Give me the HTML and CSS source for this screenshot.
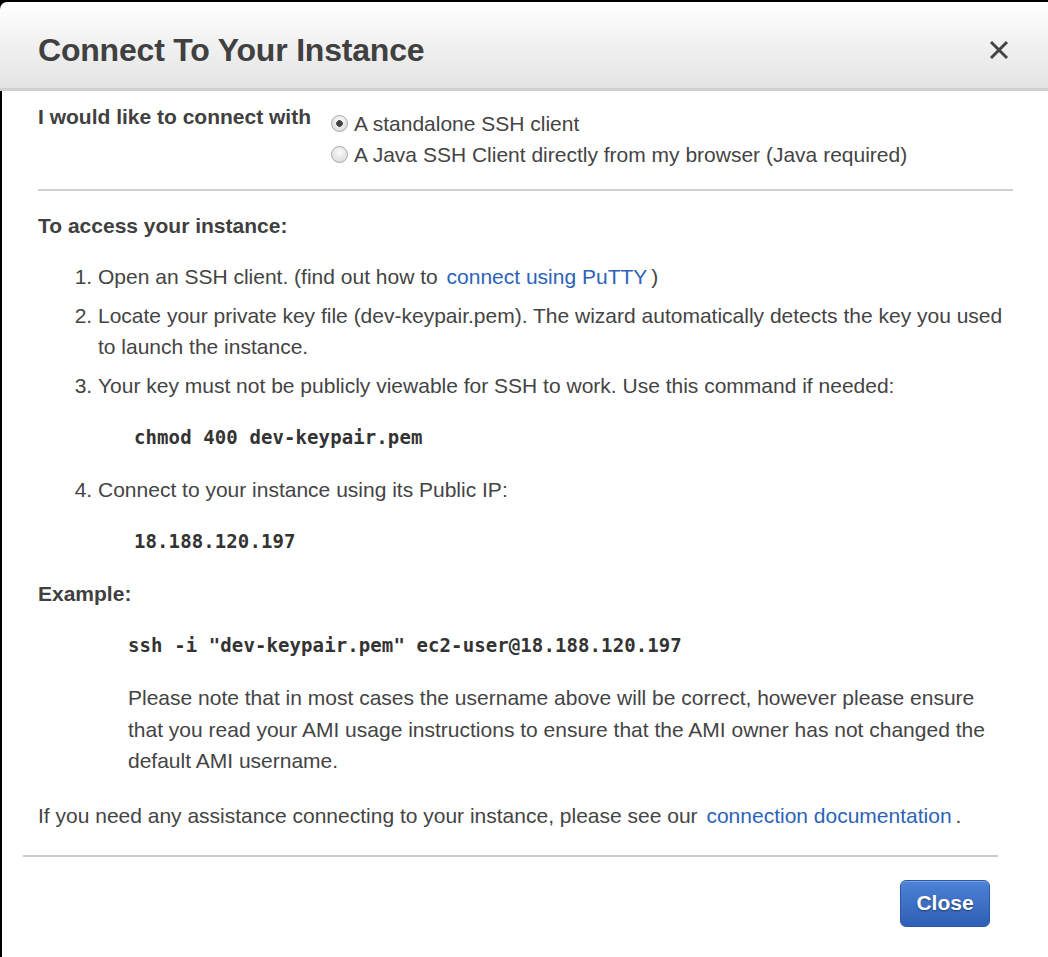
FILE: index.html
```html
<!DOCTYPE html>
<html lang="en">
<head>
<meta charset="utf-8">
<title>Connect To Your Instance</title>
<link rel="stylesheet" href="styles.css">
</head>
<body>
<div class="dialog">
  <header class="dialog-header">
    <h1 class="dialog-title">Connect To Your Instance</h1>
    <button class="close-x" aria-label="Close">
      <svg width="20" height="20" viewBox="0 0 20 20"><path d="M2 2 L18 18 M18 2 L2 18" stroke="#444" stroke-width="3" fill="none" stroke-linecap="butt"/></svg>
    </button>
  </header>
  <div class="dialog-body">
    <div class="content">
      <div class="connect-row">
        <div class="connect-label">I would like to connect with</div>
        <div class="connect-options">
          <label class="option"><input type="radio" name="client" class="radio" checked> A standalone SSH client</label>
          <label class="option"><input type="radio" name="client" class="radio"> A Java SSH Client directly from my browser (Java required)</label>
        </div>
      </div>
      <hr class="rule">
      <h2 class="heading">To access your instance:</h2>
      <ol class="steps">
        <li>Open an SSH client. (find out how to <a class="link" href="#">connect using PuTTY</a>)</li>
        <li>Locate your private key file (dev-keypair.pem). The wizard automatically detects the key you used to launch the instance.</li>
        <li>Your key must not be publicly viewable for SSH to work. Use this command if needed:
          <pre class="code code-step">chmod 400 dev-keypair.pem</pre>
        </li>
        <li>Connect to your instance using its Public IP:
          <pre class="code code-step">18.188.120.197</pre>
        </li>
      </ol>
      <h2 class="heading">Example:</h2>
      <div class="example">
        <pre class="code">ssh -i "dev-keypair.pem" ec2-user@18.188.120.197</pre>
        <p class="note">Please note that in most cases the username above will be correct, however please ensure that you read your AMI usage instructions to ensure that the AMI owner has not changed the default AMI username.</p>
      </div>
      <p class="help">If you need any assistance connecting to your instance, please see our <a class="link" href="#">connection documentation</a>.</p>
    </div>
    <div class="footer">
      <button class="btn-close">Close</button>
    </div>
  </div>
</div>
</body>
</html>
```
FILE: styles.css
```css
html, body {
  margin: 0;
  padding: 0;
  background: #000;
  height: 100%;
  overflow: hidden;
}
body {
  font-family: "Liberation Sans", Arial, sans-serif;
  color: #444;
}
.dialog {
  margin-top: 2px;
  height: calc(100vh - 2px);
  display: flex;
  flex-direction: column;
}
.dialog-header {
  box-sizing: border-box;
  height: 89px;
  border-top-left-radius: 7px;
  background: linear-gradient(#ffffff, #e3e3e3);
  border-bottom: 3px solid #d0d0d0;
  display: flex;
  align-items: center;
  justify-content: space-between;
  padding: 10px 38px 0 38px;
}
.dialog-title {
  margin: 0;
  font-size: 32px;
  font-weight: bold;
  color: #404040;
  letter-spacing: -0.2px;
}
.close-x {
  background: none;
  border: 0;
  padding: 0;
  margin-right: 1px;
  width: 20px;
  height: 20px;
  display: block;
}
.close-x svg { display: block; }
.dialog-body {
  flex: 1;
  background: #fff;
  margin-left: 2px;
  font-size: 21px;
  line-height: 31px;
}
.content {
  padding: 0 35px 0 36px;
}
.connect-row {
  display: flex;
  padding-top: 17px;
}
.connect-label {
  font-weight: bold;
  width: 293px;
  margin-top: -7px;
  color: #404040;
}
.connect-options {
  display: flex;
  flex-direction: column;
}
.option {
  display: flex;
  align-items: center;
  gap: 6px;
}
.radio {
  appearance: none;
  -webkit-appearance: none;
  width: 17px;
  height: 17px;
  margin: 0;
  border-radius: 50%;
  border: 1px solid #a8a8a8;
  box-sizing: border-box;
  background: radial-gradient(circle at 50% 35%, #fafafa, #d6d6d6);
}
.radio:checked {
  background: radial-gradient(circle, #444 0, #444 3px, transparent 3.6px), radial-gradient(circle at 50% 35%, #fafafa, #d6d6d6);
}
.rule {
  border: 0;
  border-top: 2px solid #cfcfcf;
  margin: 19px 0 0 0;
}
.heading {
  font-size: 21px;
  font-weight: bold;
  margin: 19px 0 0 0;
  color: #404040;
}
.steps {
  margin: 20px 0 0 0;
  padding-left: 60px;
}
.steps li {
  margin-top: 8px;
}
.steps li:first-child { margin-top: 0; }
.code {
  font-family: "DejaVu Sans Mono", "Liberation Mono", monospace;
  font-weight: bold;
  font-size: 19px;
  line-height: 31px;
  letter-spacing: 0.1px;
  color: #333;
  margin: 21px 0;
}
.code-step {
  margin-left: 36px;
}
.example {
  margin-top: 21px;
  padding-left: 90px;
}
.example .code { margin: 0; }
.note {
  margin: 21px 0 0 0;
  line-height: 31.5px;
}
.help {
  margin: 23px 0 0 0;
}
.link {
  color: #2b63b8;
  text-decoration: none;
  padding: 0 4px 0 3px;
}
.footer {
  margin: 24px 50px 0 21px;
  border-top: 2px solid #cccccc;
  padding-top: 23px;
  display: flex;
  justify-content: flex-end;
}
.btn-close {
  width: 90px;
  height: 47px;
  margin-right: 8px;
  border: 1px solid #2b58a8;
  border-radius: 6px;
  background: linear-gradient(#4d82d6, #2e5fb6);
  color: #fff;
  font-family: "Liberation Sans", Arial, sans-serif;
  font-size: 21px;
  font-weight: bold;
  text-shadow: 0 1px 2px rgba(0,0,0,0.45);
  box-shadow: inset 0 1px 0 rgba(255,255,255,0.25);
}
```
